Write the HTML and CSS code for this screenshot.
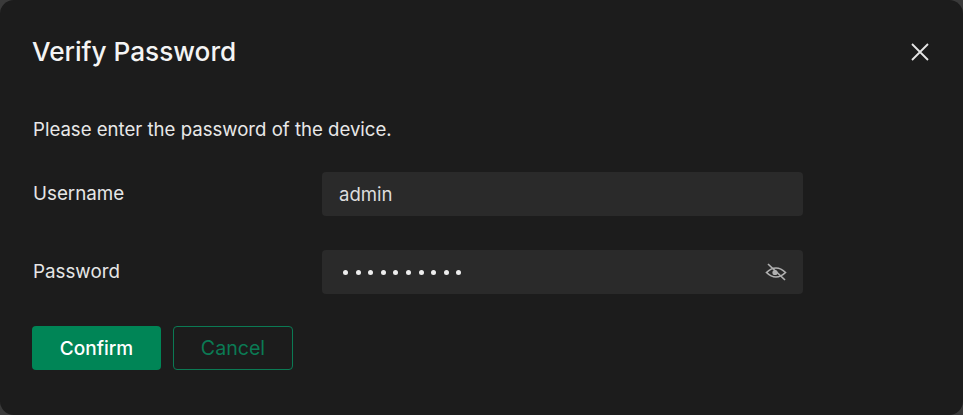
FILE: index.html
```html
<!DOCTYPE html>
<html lang="en">
<head>
    <meta charset="UTF-8">
    <meta name="viewport" content="width=device-width, initial-scale=1.0">
    <title>Verify Password</title>
    <link rel="stylesheet" href="styles.css">
</head>
<body>
    <div class="dialog">
        <div class="dialog-header">
            <h1 class="dialog-title">Verify Password</h1>
            <svg class="close-icon" viewBox="0 0 18 18" width="18" height="18">
                <path d="M1 1L17 17M17 1L1 17" stroke="#e6e6e6" stroke-width="1.8" fill="none"/>
            </svg>
        </div>
        <p class="dialog-text">Please enter the password of the device.</p>
        <div class="form-row">
            <label class="form-label">Username</label>
            <div class="form-input">admin</div>
        </div>
        <div class="form-row">
            <label class="form-label">Password</label>
            <div class="form-input form-input-password">
                <span class="password-dots">
                    <i></i><i></i><i></i><i></i><i></i><i></i><i></i><i></i><i></i><i></i>
                </span>
                <svg class="eye-icon" viewBox="0 0 22 18" width="22" height="18">
                    <path d="M1.5 9.5C4.5 6.5 7.5 5 11 5C14.5 5 17.5 6.5 20.5 9.5C17.5 12.5 14.5 14 11 14C7.5 14 4.5 12.5 1.5 9.5Z" stroke="#b0b0b0" stroke-width="1.7" fill="none"/>
                    <circle cx="10" cy="9.5" r="2.6" fill="#b0b0b0"/>
                    <path d="M3 1L20 17" stroke="#b0b0b0" stroke-width="1.7" fill="none"/>
                </svg>
            </div>
        </div>
        <div class="dialog-actions">
            <button class="btn btn-primary">Confirm</button>
            <button class="btn btn-outline">Cancel</button>
        </div>
    </div>
</body>
</html>
```

FILE: styles.css
```css
html, body {
    margin: 0;
    height: 100%;
    background-color: #3a3a3a;
}

.dialog {
    box-sizing: border-box;
    height: 415px;
    padding: 0 33px;
    background-color: #1c1c1c;
    border-radius: 14px;
    color: #e8e8e8;
    font-family: Inter, "Liberation Sans", sans-serif;
}

.dialog-header {
    display: flex;
    justify-content: space-between;
    align-items: center;
    height: 102px;
    padding-right: 1px;
}

.dialog-title {
    margin: 0 0 0 -1px;
    font-size: 26.2px;
    font-weight: 500;
    color: #f4f4f4;
}

.close-icon {
    display: block;
    margin-top: 1px;
}

.dialog-text {
    margin: 16px 0 0;
    height: 22px;
    line-height: 22px;
    font-size: 18.6px;
    color: #e8e8e8;
}

.form-row {
    display: flex;
    align-items: center;
    margin-top: 32px;
    margin-bottom: 32px;
}

.form-row + .form-row {
    margin-top: 34px;
}

.form-label {
    width: 289px;
    margin-top: -2px;
    font-size: 18.8px;
    color: #e6e6e6;
}

.form-input {
    box-sizing: border-box;
    display: flex;
    justify-content: space-between;
    align-items: center;
    width: 481px;
    height: 44px;
    padding: 0 16px 0 17px;
    background-color: #2a2a2a;
    border-radius: 4px;
    font-size: 18.6px;
    color: #dcdcdc;
}

.form-input-password {
    padding-left: 21px;
}

.password-dots {
    display: flex;
    gap: 7.6px;
}

.password-dots i {
    width: 5px;
    height: 5px;
    border-radius: 50%;
    background-color: #eeeeee;
}

.dialog-actions {
    display: flex;
    gap: 12px;
    margin-left: -1px;
}

.btn {
    box-sizing: border-box;
    height: 44px;
    padding: 0;
    border-radius: 4px;
    font-family: inherit;
    font-size: 19px;
}

.btn-primary {
    width: 129px;
    border: none;
    background-color: #008556;
    font-weight: 500;
    color: #ffffff;
}

.btn-outline {
    width: 120px;
    border: 1.5px solid #0b7a54;
    background-color: transparent;
    font-size: 19.6px;
    color: #0b7a54;
}
```
